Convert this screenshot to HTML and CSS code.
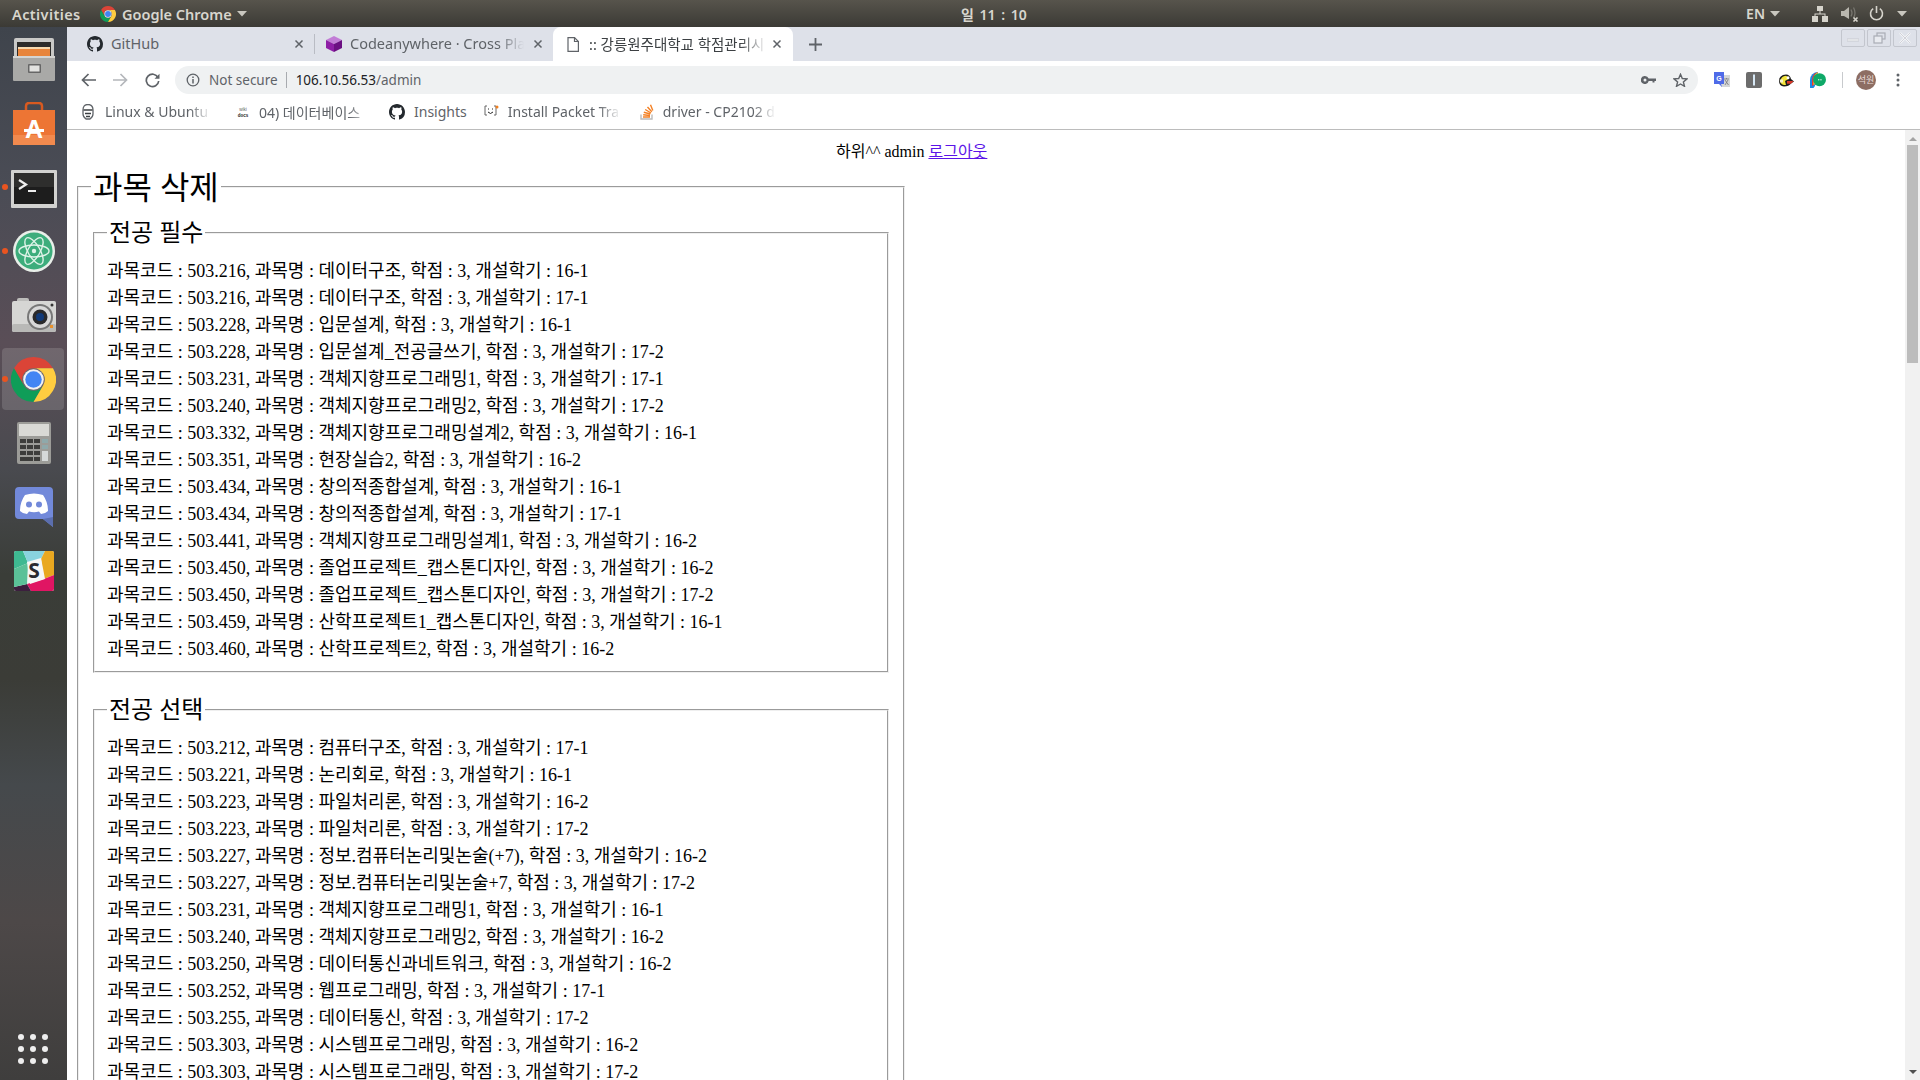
FILE: index.html
```html
<!DOCTYPE html>
<html lang="ko">
<head>
<meta charset="UTF-8">
<meta name="viewport" content="width=device-width, initial-scale=1.0">
<title>:: 강릉원주대학교 학점관리시스템</title>
<link rel="stylesheet" href="styles.css">
</head>
<body>
<svg class="defs" width="0" height="0">
    <symbol id="chrome" viewBox="0 0 48 48">
        <path fill="#db4437" d="M24 0A24 24 0 0 0 3.2 12L13.6 30A12 12 0 0 1 24 12H44.8A24 24 0 0 0 24 0Z"/>
        <path fill="#0f9d58" d="M3.2 12A24 24 0 0 0 24 48L34.4 30A12 12 0 0 1 13.6 30Z"/>
        <path fill="#ffcd40" d="M24 12H44.8A24 24 0 0 1 24 48L34.4 30A12 12 0 0 0 24 12Z"/>
        <circle cx="24" cy="24" r="11" fill="#f1f1f1"/>
        <circle cx="24" cy="24" r="8.8" fill="#4285f4"/>
    </symbol>
    <symbol id="github" viewBox="0 0 16 16">
        <path fill="#24292e" d="M8 0C3.58 0 0 3.58 0 8c0 3.54 2.29 6.53 5.47 7.59.4.07.55-.17.55-.38 0-.19-.01-.82-.01-1.49-2.01.37-2.53-.49-2.69-.94-.09-.23-.48-.94-.82-1.13-.28-.15-.68-.52-.01-.53.63-.01 1.08.58 1.23.82.72 1.21 1.87.87 2.33.66.07-.52.28-.87.51-1.07-1.78-.2-3.64-.89-3.64-3.95 0-.87.31-1.59.82-2.15-.08-.2-.36-1.02.08-2.12 0 0 .67-.21 2.2.82.64-.18 1.32-.27 2-.27.68 0 1.36.09 2 .27 1.53-1.04 2.2-.82 2.2-.82.44 1.1.16 1.92.08 2.12.51.56.82 1.27.82 2.15 0 3.07-1.87 3.75-3.65 3.95.29.25.54.73.54 1.48 0 1.07-.01 1.93-.01 2.2 0 .21.15.46.55.38A8.013 8.013 0 0 0 16 8c0-4.42-3.58-8-8-8z"/>
    </symbol>
    <symbol id="close" viewBox="0 0 10 10">
        <path d="M1.5 1.5L8.5 8.5M8.5 1.5L1.5 8.5" stroke="#5f6368" stroke-width="1.5" fill="none"/>
    </symbol>
    <symbol id="caret" viewBox="0 0 10 6">
        <path d="M0 0H10L5 5.5Z" fill="#c9c7bf"/>
    </symbol>
</svg>

<div class="topbar">
    <div class="top-left">
        <span class="activities">Activities</span>
        <svg class="top-chrome" width="16" height="16"><use href="#chrome"/></svg>
        <span class="app-name">Google Chrome</span>
        <svg class="top-caret" width="10" height="6"><use href="#caret"/></svg>
    </div>
    <span class="clock">일 11 : 10</span>
    <div class="top-right">
        <span class="lang">EN</span>
        <svg class="top-caret" width="10" height="6"><use href="#caret"/></svg>
        <svg class="tray-net" width="16" height="16" viewBox="0 0 16 16" fill="#d6d4cc">
            <rect x="5" y="0" width="6" height="5"/>
            <rect x="0" y="10" width="6" height="6"/>
            <rect x="10" y="10" width="6" height="6"/>
            <path d="M7.5 5h1v2.5H13.500v2.500h-1V8.500H3.500v1.500h-1V7.500H7.500z"/>
        </svg>
        <svg class="tray-sound" width="18" height="16" viewBox="0 0 18 16">
            <path d="M0 5H3L8 1V13L3 10H0Z" fill="#b9b7af"/>
            <path d="M10 3.500Q12 7 10 10.500M12.500 1.500Q15.500 7 12.500 12" stroke="#77756e" stroke-width="1.300" fill="none"/>
            <path d="M12.500 11.500L16.500 15.500M16.500 11.500L12.500 15.500" stroke="#d6d4cc" stroke-width="1.600"/>
        </svg>
        <svg class="tray-power" width="15" height="15" viewBox="0 0 15 15" fill="none" stroke="#d6d4cc" stroke-width="1.600">
            <path d="M4.200 2.700A6 6 0 1 0 10.800 2.700"/>
            <path d="M7.500 0V7"/>
        </svg>
        <svg class="top-caret" width="10" height="6"><use href="#caret"/></svg>
    </div>
</div>

<div class="desktop">
    <nav class="dock">
        <div class="slot">
            <svg width="42" height="43" viewBox="0 0 42 43">
                <rect x="1" y="0" width="40" height="20" rx="2" fill="#c9c9c7"/>
                <rect x="4" y="4" width="34" height="14" fill="#2d2c2a"/>
                <rect x="5" y="9" width="32" height="2" fill="#f7d9ae"/>
                <rect x="5" y="11" width="32" height="7" fill="#e8853c"/>
                <rect x="0" y="18" width="42" height="25" rx="1" fill="#a9a9a7"/>
                <rect x="0" y="18" width="42" height="2" fill="#d5d5d3"/>
                <rect x="15" y="26" width="13" height="9" rx="1" fill="#666"/>
                <rect x="16.500" y="27.500" width="10" height="6" fill="#e2e2e0"/>
            </svg>
        </div>
        <div class="slot">
            <svg width="42" height="43" viewBox="0 0 42 43">
                <path d="M13 9V4Q13 1 16 1H26Q29 1 29 4V9" fill="none" stroke="#d85a20" stroke-width="2.500"/>
                <path d="M0 8H42V43H0Z" fill="#ed7534"/>
                <path d="M0 33H42V43H0Z" fill="#f28a4e"/>
                <text class="shop-letter" x="21" y="36" text-anchor="middle">A</text>
                <rect x="11" y="27" width="20" height="3" fill="#fff"/>
            </svg>
        </div>
        <div class="slot">
            <svg class="terminal-icon" width="46" height="38" viewBox="0 0 46 38">
                <rect width="46" height="38" rx="1" fill="#d2d2d0"/>
                <rect x="3" y="3" width="40" height="31" fill="#1d1d1d"/>
                <rect x="3" y="3" width="40" height="14" fill="#2e2e2d"/>
                <path d="M8 10L15 14.500L8 19" stroke="#eee" stroke-width="2.200" fill="none"/>
                <rect x="17" y="20" width="8" height="2" fill="#eee"/>
            </svg>
        </div>
        <div class="slot">
            <svg width="42" height="42" viewBox="0 0 42 42">
                <circle cx="21" cy="21" r="21" fill="#e9efe9"/>
                <circle cx="21" cy="21" r="18.500" fill="#3dad7c"/>
                <g fill="none" stroke="#dff3e8" stroke-width="1.400">
                    <ellipse cx="21" cy="21" rx="15" ry="6"/>
                    <ellipse cx="21" cy="21" rx="15" ry="6" transform="rotate(60 21 21)"/>
                    <ellipse cx="21" cy="21" rx="15" ry="6" transform="rotate(120 21 21)"/>
                </g>
                <circle cx="21" cy="21" r="2.200" fill="#dff3e8"/>
            </svg>
        </div>
        <div class="slot">
            <svg width="44" height="34" viewBox="0 0 44 34">
                <rect x="5" y="0" width="12" height="5" rx="2" fill="#bdbdbb"/>
                <rect y="3" width="44" height="31" rx="2" fill="#d6d6d4"/>
                <rect y="26" width="44" height="8" rx="2" fill="#b9b9b7"/>
                <circle cx="28" cy="19" r="13" fill="#777"/>
                <circle cx="28" cy="19" r="11" fill="#d8d8d8"/>
                <circle cx="28" cy="19" r="7.500" fill="#2a2a2c"/>
                <circle cx="28" cy="19" r="4" fill="#123a78"/>
                <rect x="38" y="27" width="3" height="3" fill="#e8902c"/>
                <circle cx="40" cy="7" r="1.500" fill="#333"/>
            </svg>
        </div>
        <div class="slot slot-active">
            <i class="running"></i>
            <svg width="45" height="45"><use href="#chrome"/></svg>
        </div>
        <div class="slot">
            <svg width="34" height="42" viewBox="0 0 34 42">
                <rect width="34" height="42" rx="2" fill="#9c9c98"/>
                <rect x="2" y="2" width="30" height="12" fill="#d9d9d5"/>
                <g fill="#3d3d3b">
                    <rect x="3" y="17" width="6" height="4"/><rect x="10" y="17" width="6" height="4"/><rect x="17" y="17" width="6" height="4"/>
                    <rect x="3" y="23" width="6" height="4"/><rect x="10" y="23" width="6" height="4"/><rect x="17" y="23" width="6" height="4"/>
                    <rect x="3" y="29" width="6" height="4"/><rect x="10" y="29" width="6" height="4"/><rect x="17" y="29" width="6" height="4"/>
                    <rect x="3" y="35" width="13" height="4"/><rect x="17" y="35" width="6" height="4"/>
                </g>
                <rect x="25" y="17" width="6" height="4" fill="#8fa9ab"/>
                <rect x="25" y="23" width="6" height="4" fill="#8fa9ab"/>
                <rect x="25" y="29" width="6" height="10" fill="#d5d9d9"/>
            </svg>
        </div>
        <div class="slot">
            <svg width="38" height="40" viewBox="0 0 38 40">
                <path d="M4 0H34Q38 0 38 4V40L28 32H4Q0 32 0 28V4Q0 0 4 0Z" fill="#7289da"/>
                <path d="M28 32L38 40V30Z" fill="#5b6eae"/>
                <path d="M10 8Q19 5 28 8Q33 15 33 24Q30 27 26 27L24 24.500Q19 26 14 24.500L12 27Q8 27 5 24Q5 15 10 8Z" fill="#fff"/>
                <circle cx="14" cy="17.500" r="3" fill="#7289da"/>
                <circle cx="24" cy="17.500" r="3" fill="#7289da"/>
            </svg>
        </div>
        <div class="slot">
            <svg width="40" height="40" viewBox="0 0 40 40">
                <rect width="40" height="40" rx="2" fill="#f5f5f5"/>
                <path d="M0 2Q0 0 2 0H9L14 12L0 18Z" fill="#3eb991"/>
                <path d="M9 0H31L27 8L14 12Z" fill="#89d3df"/>
                <path d="M31 0H38Q40 0 40 2V24L30 28L27 8Z" fill="#e9a820"/>
                <path d="M40 24V38Q40 40 38 40H17L13 33L30 28Z" fill="#e01563"/>
                <path d="M17 40H2Q0 40 0 38V36L13 33Z" fill="#3c1f3e"/>
                <path d="M0 18L14 12L13 33L0 36Z" fill="#5bc198"/>
                <path d="M13 11L27 7L31 28L16 33Z" fill="#f7f7f7"/>
                <text class="slack-letter" x="20" y="27" text-anchor="middle">S</text>
            </svg>
        </div>
        <div class="apps-grid">
            <i></i><i></i><i></i><i></i><i></i><i></i><i></i><i></i><i></i>
        </div>
    </nav>

    <div class="browser">
        <div class="tabstrip">
            <div class="tab tab-one">
                <svg width="16" height="16"><use href="#github"/></svg>
                <span class="tab-title">GitHub</span>
                <svg class="tab-close" width="10" height="10"><use href="#close"/></svg>
            </div>
            <i class="tab-sep"></i>
            <div class="tab tab-two">
                <svg width="16" height="16" viewBox="0 0 16 16">
                    <path d="M8 0L16 4L8 8L0 4Z" fill="#c27cd6"/>
                    <path d="M0 4L8 8V16L0 12Z" fill="#8e1ea6"/>
                    <path d="M16 4L8 8V16L16 12Z" fill="#6b0f82"/>
                </svg>
                <span class="tab-title">Codeanywhere · Cross Pla</span>
                <svg class="tab-close" width="10" height="10"><use href="#close"/></svg>
            </div>
            <div class="tab tab-active">
                <svg width="12" height="15" viewBox="0 0 12 15" fill="none" stroke="#5f6368" stroke-width="1.200">
                    <path d="M1 .6H7.500L11.400 4.500V14.400H1Z"/>
                    <path d="M7.500 .6V4.500H11.400"/>
                </svg>
                <span class="tab-title">:: 강릉원주대학교 학점관리시</span>
                <svg class="tab-close" width="10" height="10"><use href="#close"/></svg>
            </div>
            <svg class="new-tab" width="13" height="13" viewBox="0 0 13 13">
                <path d="M6.500 0V13M0 6.500H13" stroke="#5f6368" stroke-width="1.800"/>
            </svg>
            <div class="win-controls">
                <span class="win-btn"><svg width="12" height="12" viewBox="0 0 12 12"><rect x="0" y="7" width="12" height="2" fill="#f4f5f7" stroke="#b8bbc4" stroke-width=".6"/></svg></span>
                <span class="win-btn"><svg width="13" height="12" viewBox="0 0 13 12" fill="none" stroke="#a9acb5" stroke-width="1.200"><rect x="4" y="1" width="8" height="6"/><rect x="1" y="4" width="8" height="7" fill="#e9ebf0"/></svg></span>
                <span class="win-btn"><svg width="12" height="12" viewBox="0 0 12 12"><path d="M1 1L11 11M11 1L1 11" stroke="#f4f5f7" stroke-width="2.400"/><path d="M1 1L11 11M11 1L1 11" stroke="#b8bbc4" stroke-width=".6"/></svg></span>
            </div>
        </div>

        <div class="toolbar">
            <svg class="nav-icon" width="15" height="14" viewBox="0 0 15 14" fill="none" stroke="#5f6368" stroke-width="1.700"><path d="M15 7H1.500M7.500 1L1.500 7L7.500 13"/></svg>
            <svg class="nav-icon" width="15" height="14" viewBox="0 0 15 14" fill="none" stroke="#b4b7bb" stroke-width="1.700"><path d="M0 7H13.500M7.500 1L13.500 7L7.500 13"/></svg>
            <svg class="nav-icon" width="15" height="15" viewBox="0 0 15 15" fill="none" stroke="#5f6368" stroke-width="1.700"><path d="M13 4.500A6.200 6.200 0 1 0 13.700 8"/><path d="M14.500 .8V5.800H9.500Z" fill="#5f6368" stroke="none"/></svg>
            <div class="omnibox">
                <svg class="info-icon" width="14" height="14" viewBox="0 0 14 14" fill="none" stroke="#5f6368" stroke-width="1.300">
                    <circle cx="7" cy="7" r="5.800"/>
                    <path d="M7 6V10.500M7 3.500V5" stroke-width="1.500"/>
                </svg>
                <span class="not-secure">Not secure</span>
                <span class="url"><b>106.10.56.53</b>/admin</span>
                <svg class="key-icon" width="15" height="8" viewBox="0 0 15 8" fill="#5f6368">
                    <path d="M4 0A4 4 0 0 1 7.700 2.500H15V5H13.500V6.500H11.500V5H7.700A4 4 0 1 1 4 0ZM4 2.500A1.500 1.500 0 1 0 4 5.500A1.500 1.500 0 0 0 4 2.500Z" fill-rule="evenodd"/>
                </svg>
                <svg class="star-icon" width="15" height="14" viewBox="0 0 15 14" fill="none" stroke="#5f6368" stroke-width="1.400">
                    <path d="M7.500 1.300L9.300 5.500L13.900 5.900L10.400 8.900L11.500 13.300L7.500 11L3.500 13.300L4.600 8.900L1.100 5.900L5.700 5.500Z"/>
                </svg>
            </div>
            <div class="extensions">
                <svg width="16" height="16" viewBox="0 0 16 16">
                    <rect x="7" y="3" width="9" height="12" fill="#d4d6d8"/>
                    <path d="M0 0H10V12H7L8 15L5 12H0Z" fill="#4f6be8"/>
                    <text class="ext-letter" x="5" y="9" text-anchor="middle">G</text>
                    <path d="M10 7H15M12.500 7V6M11 8L14.500 13M14 8L11 13" stroke="#777" stroke-width=".8"/>
                </svg>
                <svg width="16" height="16" viewBox="0 0 16 16">
                    <rect width="16" height="16" rx="2" fill="#6c6c6c"/>
                    <rect x="7" y="2.500" width="2" height="11" fill="#d7e8f5"/>
                </svg>
                <svg width="16" height="13" viewBox="0 0 16 13">
                    <path d="M1 7Q1 1 8 .5Q12 .5 13 5L16 7.500L13 9.500Q11 12.500 6 12.500Q1 12 1 7Z" fill="#1d1d1b"/>
                    <path d="M2.500 7Q3 2 8 1.800Q10 2 10.500 5L7 7L8 11H6Q2.500 10.500 2.500 7Z" fill="#f2e43a"/>
                    <circle cx="10" cy="3.800" r="1.500" fill="#fff"/>
                    <path d="M9 7H15.500L13 9.800H9Z" fill="#d8382a"/>
                    <path d="M1.800 5.500L5 5.500L5 8.500L2 8.500Z" fill="#f7f2d0"/>
                </svg>
                <svg width="16" height="16" viewBox="0 0 16 16">
                    <path d="M8 0A8 8 0 0 0 0 8V16H3.500L5 14Z" fill="#1e88e5"/>
                    <path d="M8 0Q2 2 2 8V14L4 13Z" fill="#e53935"/>
                    <path d="M8 0Q3.500 3 3.500 8V13L5 12Z" fill="#fdd835"/>
                    <circle cx="9.500" cy="7.700" r="6.500" fill="#0fa968"/>
                    <rect x="8" y="7.300" width="1.300" height="1" fill="#fff"/>
                    <rect x="10.300" y="7.300" width="1.300" height="1" fill="#fff"/>
                </svg>
            </div>
            <i class="toolbar-sep"></i>
            <span class="avatar">석원</span>
            <svg class="menu-dots" width="4" height="14" viewBox="0 0 4 14" fill="#5f6368">
                <circle cx="2" cy="2" r="1.500"/><circle cx="2" cy="7" r="1.500"/><circle cx="2" cy="12" r="1.500"/>
            </svg>
        </div>

        <div class="bookmarks">
            <div class="bookmark bm-linux">
                <svg width="12" height="16" viewBox="0 0 12 16">
                    <path d="M6 .5Q11 .5 11 6V10Q11 13 8 15H4Q1 13 1 10V6Q1 .5 6 .5Z" fill="#fff" stroke="#5f6368" stroke-width="1.300"/>
                    <path d="M1.500 6H10.500M3 9.500H9M4 12.500H8" stroke="#3c4043" stroke-width="1.300"/>
                </svg>
                <span class="bm-title">Linux &amp; Ubuntu</span>
            </div>
            <div class="bookmark bm-wiki">
                <svg width="14" height="14" viewBox="0 0 14 14">
                    <text class="wiki-text" x="7" y="5.500" text-anchor="middle">wiki</text>
                    <text class="wiki-text wiki-dark" x="7" y="12" text-anchor="middle">docs</text>
                </svg>
                <span class="bm-title">04) 데이터베이스</span>
            </div>
            <div class="bookmark bm-insights">
                <svg width="16" height="16"><use href="#github"/></svg>
                <span class="bm-title">Insights</span>
            </div>
            <div class="bookmark bm-packet">
                <svg width="15" height="13" viewBox="0 0 15 13" fill="none" stroke="#666" stroke-width="1">
                    <path d="M3 1H1V10H3M10 1H12V10H10"/>
                    <path d="M4 4H5M8 4H9" stroke="#222"/>
                    <path d="M4 7Q6.500 10 9 7" stroke="#222"/>
                    <circle cx="13" cy="2" r="1.500" fill="#f08020" stroke="none"/>
                </svg>
                <span class="bm-title">Install Packet Tra</span>
            </div>
            <div class="bookmark bm-stack">
                <svg width="14" height="16" viewBox="0 0 14 16" fill="none" stroke="#f48024" stroke-width="1.400">
                    <path d="M1 10.500V15H12V10.500" stroke="#bcbbbb"/>
                    <path d="M3 13H10M3.200 10.800L10 11.500M3.800 8.300L10.300 10M5.200 5.500L11 9M7.500 3L11.800 7.800M10.500 .8L12.800 6.500"/>
                </svg>
                <span class="bm-title">driver - CP2102 d</span>
            </div>
        </div>

        <div class="viewport">
            <main class="page">
                <div class="greeting">하위^^ admin <a href="#">로그아웃</a></div>
                <fieldset class="outer">
                    <legend class="legend-main">과목 삭제</legend>
                    <fieldset class="group">
                        <legend class="legend-sub">전공 필수</legend>
                        <div class="row">과목코드 : 503.216, 과목명 : 데이터구조, 학점 : 3, 개설학기 : 16-1</div>
                        <div class="row">과목코드 : 503.216, 과목명 : 데이터구조, 학점 : 3, 개설학기 : 17-1</div>
                        <div class="row">과목코드 : 503.228, 과목명 : 입문설계, 학점 : 3, 개설학기 : 16-1</div>
                        <div class="row">과목코드 : 503.228, 과목명 : 입문설계_전공글쓰기, 학점 : 3, 개설학기 : 17-2</div>
                        <div class="row">과목코드 : 503.231, 과목명 : 객체지향프로그래밍1, 학점 : 3, 개설학기 : 17-1</div>
                        <div class="row">과목코드 : 503.240, 과목명 : 객체지향프로그래밍2, 학점 : 3, 개설학기 : 17-2</div>
                        <div class="row">과목코드 : 503.332, 과목명 : 객체지향프로그래밍설계2, 학점 : 3, 개설학기 : 16-1</div>
                        <div class="row">과목코드 : 503.351, 과목명 : 현장실습2, 학점 : 3, 개설학기 : 16-2</div>
                        <div class="row">과목코드 : 503.434, 과목명 : 창의적종합설계, 학점 : 3, 개설학기 : 16-1</div>
                        <div class="row">과목코드 : 503.434, 과목명 : 창의적종합설계, 학점 : 3, 개설학기 : 17-1</div>
                        <div class="row">과목코드 : 503.441, 과목명 : 객체지향프로그래밍설계1, 학점 : 3, 개설학기 : 16-2</div>
                        <div class="row">과목코드 : 503.450, 과목명 : 졸업프로젝트_캡스톤디자인, 학점 : 3, 개설학기 : 16-2</div>
                        <div class="row">과목코드 : 503.450, 과목명 : 졸업프로젝트_캡스톤디자인, 학점 : 3, 개설학기 : 17-2</div>
                        <div class="row">과목코드 : 503.459, 과목명 : 산학프로젝트1_캡스톤디자인, 학점 : 3, 개설학기 : 16-1</div>
                        <div class="row">과목코드 : 503.460, 과목명 : 산학프로젝트2, 학점 : 3, 개설학기 : 16-2</div>
                    </fieldset>
                    <fieldset class="group">
                        <legend class="legend-sub">전공 선택</legend>
                        <div class="row">과목코드 : 503.212, 과목명 : 컴퓨터구조, 학점 : 3, 개설학기 : 17-1</div>
                        <div class="row">과목코드 : 503.221, 과목명 : 논리회로, 학점 : 3, 개설학기 : 16-1</div>
                        <div class="row">과목코드 : 503.223, 과목명 : 파일처리론, 학점 : 3, 개설학기 : 16-2</div>
                        <div class="row">과목코드 : 503.223, 과목명 : 파일처리론, 학점 : 3, 개설학기 : 17-2</div>
                        <div class="row">과목코드 : 503.227, 과목명 : 정보.컴퓨터논리및논술(+7), 학점 : 3, 개설학기 : 16-2</div>
                        <div class="row">과목코드 : 503.227, 과목명 : 정보.컴퓨터논리및논술+7, 학점 : 3, 개설학기 : 17-2</div>
                        <div class="row">과목코드 : 503.231, 과목명 : 객체지향프로그래밍1, 학점 : 3, 개설학기 : 16-1</div>
                        <div class="row">과목코드 : 503.240, 과목명 : 객체지향프로그래밍2, 학점 : 3, 개설학기 : 16-2</div>
                        <div class="row">과목코드 : 503.250, 과목명 : 데이터통신과네트워크, 학점 : 3, 개설학기 : 16-2</div>
                        <div class="row">과목코드 : 503.252, 과목명 : 웹프로그래밍, 학점 : 3, 개설학기 : 17-1</div>
                        <div class="row">과목코드 : 503.255, 과목명 : 데이터통신, 학점 : 3, 개설학기 : 17-2</div>
                        <div class="row">과목코드 : 503.303, 과목명 : 시스템프로그래밍, 학점 : 3, 개설학기 : 16-2</div>
                        <div class="row">과목코드 : 503.303, 과목명 : 시스템프로그래밍, 학점 : 3, 개설학기 : 17-2</div>
                    </fieldset>
                </fieldset>
            </main>
            <div class="scrollbar">
                <i class="arrow-up"></i>
                <div class="thumb"></div>
                <i class="arrow-down"></i>
            </div>
        </div>
    </div>
</div>
</body>
</html>
```

FILE: styles.css
```css
html, body {
    margin: 0;
    padding: 0;
    height: 1080px;
    overflow: hidden;
}
body {
    display: flex;
    flex-direction: column;
    background-color: #fff;
    font-family: "Noto Sans", "Noto Sans CJK KR", sans-serif;
}
svg {
    display: block;
    flex-shrink: 0;
}
.defs {
    display: none;
}

/* ubuntu top bar */
.topbar {
    height: 27px;
    flex-shrink: 0;
    display: flex;
    align-items: center;
    background: linear-gradient(#57544c, #3b3a35);
    color: #d8d6ce;
    font-size: 14.500px;
    font-weight: 600;
}
.top-left {
    width: 961px;
    display: flex;
    align-items: center;
    flex-shrink: 0;
}
.activities {
    margin-left: 12px;
    width: 88px;
    letter-spacing: 0.4px;
}
.app-name {
    margin-left: 6px;
    width: 115px;
    white-space: nowrap;
}
.top-caret {
    margin-top: 1px;
}
.clock {
    font-size: 14px;
    word-spacing: 2px;
    margin-top: 1px;
}
.top-right {
    margin-left: auto;
    display: flex;
    align-items: center;
}
.lang {
    margin-right: 5px;
    font-size: 14px;
}
.tray-net {
    margin-left: 32px;
}
.tray-sound {
    margin-left: 13px;
}
.tray-power {
    margin-left: 10px;
}
.tray-power + .top-caret {
    margin-left: 13px;
    margin-right: 13px;
}

.desktop {
    flex: 1;
    display: flex;
    min-height: 0;
}

/* launcher */
.dock {
    width: 67px;
    flex-shrink: 0;
    display: flex;
    flex-direction: column;
    background: linear-gradient(#3f444c 0, #4a4c55 15%, #5a4e57 30%, #494a4f 42%, #3a3d38 52%, #3b3c37 62%, #45494c 72%, #4d4848 85%, #3f3e3d 100%);
}
.slot {
    height: 64px;
    flex-shrink: 0;
    display: flex;
    align-items: center;
    justify-content: center;
    position: relative;
}
.slot:nth-child(3)::before,
.slot:nth-child(4)::before,
.running {
    content: "";
    position: absolute;
    left: 2px;
    top: 50%;
    width: 6px;
    height: 6px;
    margin-top: -3px;
    border-radius: 50%;
    background-color: #e95420;
}
.terminal-icon {
    margin-top: 3px;
}
.slot-active::after {
    content: "";
    position: absolute;
    left: 2px;
    right: 3px;
    top: 1px;
    bottom: 1px;
    border-radius: 4px;
    background-color: rgba(255, 255, 255, 0.14);
}
.slot-active svg {
    position: relative;
    z-index: 1;
}
.running {
    z-index: 2;
}
.shop-letter {
    font: bold 25px "Liberation Sans", sans-serif;
    fill: #fff;
}
.slack-letter {
    font: bold 21px "Noto Sans", sans-serif;
    fill: #2a2a30;
}
.apps-grid {
    margin: auto 0 16px 18px;
    display: grid;
    grid-template-columns: repeat(3, 6px);
    gap: 6px;
}
.apps-grid i {
    width: 6px;
    height: 6px;
    border-radius: 50%;
    background-color: #eee;
}

/* chrome window */
.browser {
    flex: 1;
    min-width: 0;
    display: flex;
    flex-direction: column;
}
.tabstrip {
    height: 34px;
    flex-shrink: 0;
    display: flex;
    align-items: stretch;
    background-color: #dee1e9;
    font-size: 14.500px;
    color: #5f6368;
}
.tab {
    display: flex;
    align-items: center;
}
.tab-one {
    width: 247px;
    padding-left: 20px;
    box-sizing: border-box;
}
.tab-sep {
    width: 1px;
    height: 20px;
    align-self: center;
    background-color: #b9bcc4;
}
.tab-two {
    width: 238px;
    padding-left: 11px;
    box-sizing: border-box;
}
.tab-active {
    width: 240px;
    padding-left: 14px;
    box-sizing: border-box;
    background-color: #fff;
    border-radius: 8px 8px 0 0;
    color: #3c4043;
}
.tab-title {
    margin-left: 8px;
    padding-bottom: 2px;
    white-space: nowrap;
    overflow: hidden;
    -webkit-mask-image: linear-gradient(to right, #000 85%, transparent);
    mask-image: linear-gradient(to right, #000 85%, transparent);
}
.tab-one .tab-title {
    -webkit-mask-image: none;
    mask-image: none;
}
.tab-two .tab-title {
    width: 174px;
}
.tab-active .tab-title {
    width: 178px;
    margin-left: 10px;
}
.tab-close {
    margin-left: auto;
    margin-right: 10px;
}
.tab-active .tab-close {
    margin-right: 11px;
}
.new-tab {
    align-self: center;
    margin-left: 16px;
}
.win-controls {
    margin-left: auto;
    display: flex;
    gap: 2px;
    padding: 2px 3px 0 0;
    align-self: flex-start;
}
.win-btn {
    width: 24px;
    height: 18px;
    box-sizing: border-box;
    border: 1px solid #c3c6ce;
    border-radius: 2px;
    display: flex;
    align-items: center;
    justify-content: center;
}

.toolbar {
    height: 33px;
    flex-shrink: 0;
    box-sizing: border-box;
    padding-top: 5px;
    display: flex;
    align-items: center;
    background-color: #fff;
}
.nav-icon {
    margin-left: 15px;
    margin-right: 2px;
}
.nav-icon:first-child {
    margin-left: 14px;
}
.omnibox {
    margin-left: 13px;
    width: 1523px;
    height: 28px;
    flex-shrink: 0;
    box-sizing: border-box;
    display: flex;
    align-items: center;
    background-color: #eff1f2;
    border-radius: 14px;
    font-size: 13.500px;
    color: #5f6368;
}
.info-icon {
    margin-left: 11px;
}
.not-secure {
    margin-left: 9px;
    padding-right: 8px;
    border-right: 1px solid #a8abaf;
    line-height: 16px;
}
.url {
    margin-left: 9px;
}
.url b {
    font-weight: 400;
    color: #202124;
}
.key-icon {
    margin-left: auto;
}
.star-icon {
    margin-left: 17px;
    margin-right: 10px;
}
.extensions {
    margin-left: 16px;
    display: flex;
    align-items: center;
    gap: 16px;
}
.ext-letter {
    font: bold 7px "Liberation Sans", sans-serif;
    fill: #fff;
}
.toolbar-sep {
    width: 1px;
    height: 16px;
    margin-left: 16px;
    background-color: #c8cacd;
}
.avatar {
    width: 20px;
    height: 20px;
    margin-left: 13px;
    border-radius: 50%;
    background-color: #8d6e63;
    color: #e8dcd8;
    font: 9px/20px "Noto Sans CJK KR", sans-serif;
    text-align: center;
}
.menu-dots {
    margin-left: 20px;
}

.bookmarks {
    height: 36px;
    flex-shrink: 0;
    box-sizing: border-box;
    border-bottom: 1px solid #bcbcbc;
    display: flex;
    align-items: center;
    background-color: #fff;
    font-size: 14px;
    color: #5f6368;
}
.bookmark {
    display: flex;
    align-items: center;
    white-space: nowrap;
}
.bm-title {
    margin-left: 9px;
    overflow: hidden;
    -webkit-mask-image: linear-gradient(to right, #000 80%, transparent);
    mask-image: linear-gradient(to right, #000 80%, transparent);
}
.bm-linux {
    margin-left: 15px;
}
.bm-linux .bm-title {
    width: 106px;
    margin-left: 11px;
}
.bm-wiki {
    margin-left: 25px;
}
.bm-wiki .bm-title {
    width: 112px;
}
.wiki-text {
    font: 4.500px "Liberation Sans", sans-serif;
    fill: #666;
}
.wiki-dark {
    font-weight: bold;
    fill: #222;
}
.bm-insights {
    margin-left: 18px;
}
.bm-insights .bm-title {
    -webkit-mask-image: none;
    mask-image: none;
}
.bm-packet {
    margin-left: 17px;
}
.bm-packet .bm-title {
    width: 113px;
}
.bm-stack {
    margin-left: 19px;
}
.bm-stack .bm-title {
    width: 113px;
}

/* the page itself */
.viewport {
    flex: 1;
    min-height: 0;
    display: flex;
}
.page {
    flex: 1;
    min-width: 0;
    overflow: hidden;
    box-sizing: border-box;
    padding: 8px;
    font-family: "Liberation Serif", "Noto Sans CJK KR", serif;
    font-size: 16px;
    color: #000;
}
.greeting {
    line-height: 27px;
    padding-left: 761px;
}
.greeting a {
    color: #5b14e8;
}
.outer {
    width: 828px;
    box-sizing: border-box;
    margin: 0 2px;
}
.legend-main {
    font-size: 32px;
    line-height: 40px;
    padding-top: 3px;
}
.legend-sub {
    font-size: 24px;
    line-height: 34px;
}
.group {
    margin: 2px 2px 20px;
    padding: 8px 12px 8px;
}
.row {
    font-size: 18px;
    line-height: 27px;
}

.scrollbar {
    width: 15px;
    flex-shrink: 0;
    display: flex;
    flex-direction: column;
    align-items: center;
    background-color: #f1f1f1;
}
.thumb {
    width: 11px;
    height: 218px;
    background-color: #bcbcbc;
    margin-top: 4px;
}
.arrow-up,
.arrow-down {
    width: 0;
    height: 0;
    border-left: 4px solid transparent;
    border-right: 4px solid transparent;
}
.arrow-up {
    margin-top: 7px;
    border-bottom: 4px solid #a3a3a3;
}
.arrow-down {
    margin-top: auto;
    margin-bottom: 6px;
    border-top: 4px solid #505050;
}
```
